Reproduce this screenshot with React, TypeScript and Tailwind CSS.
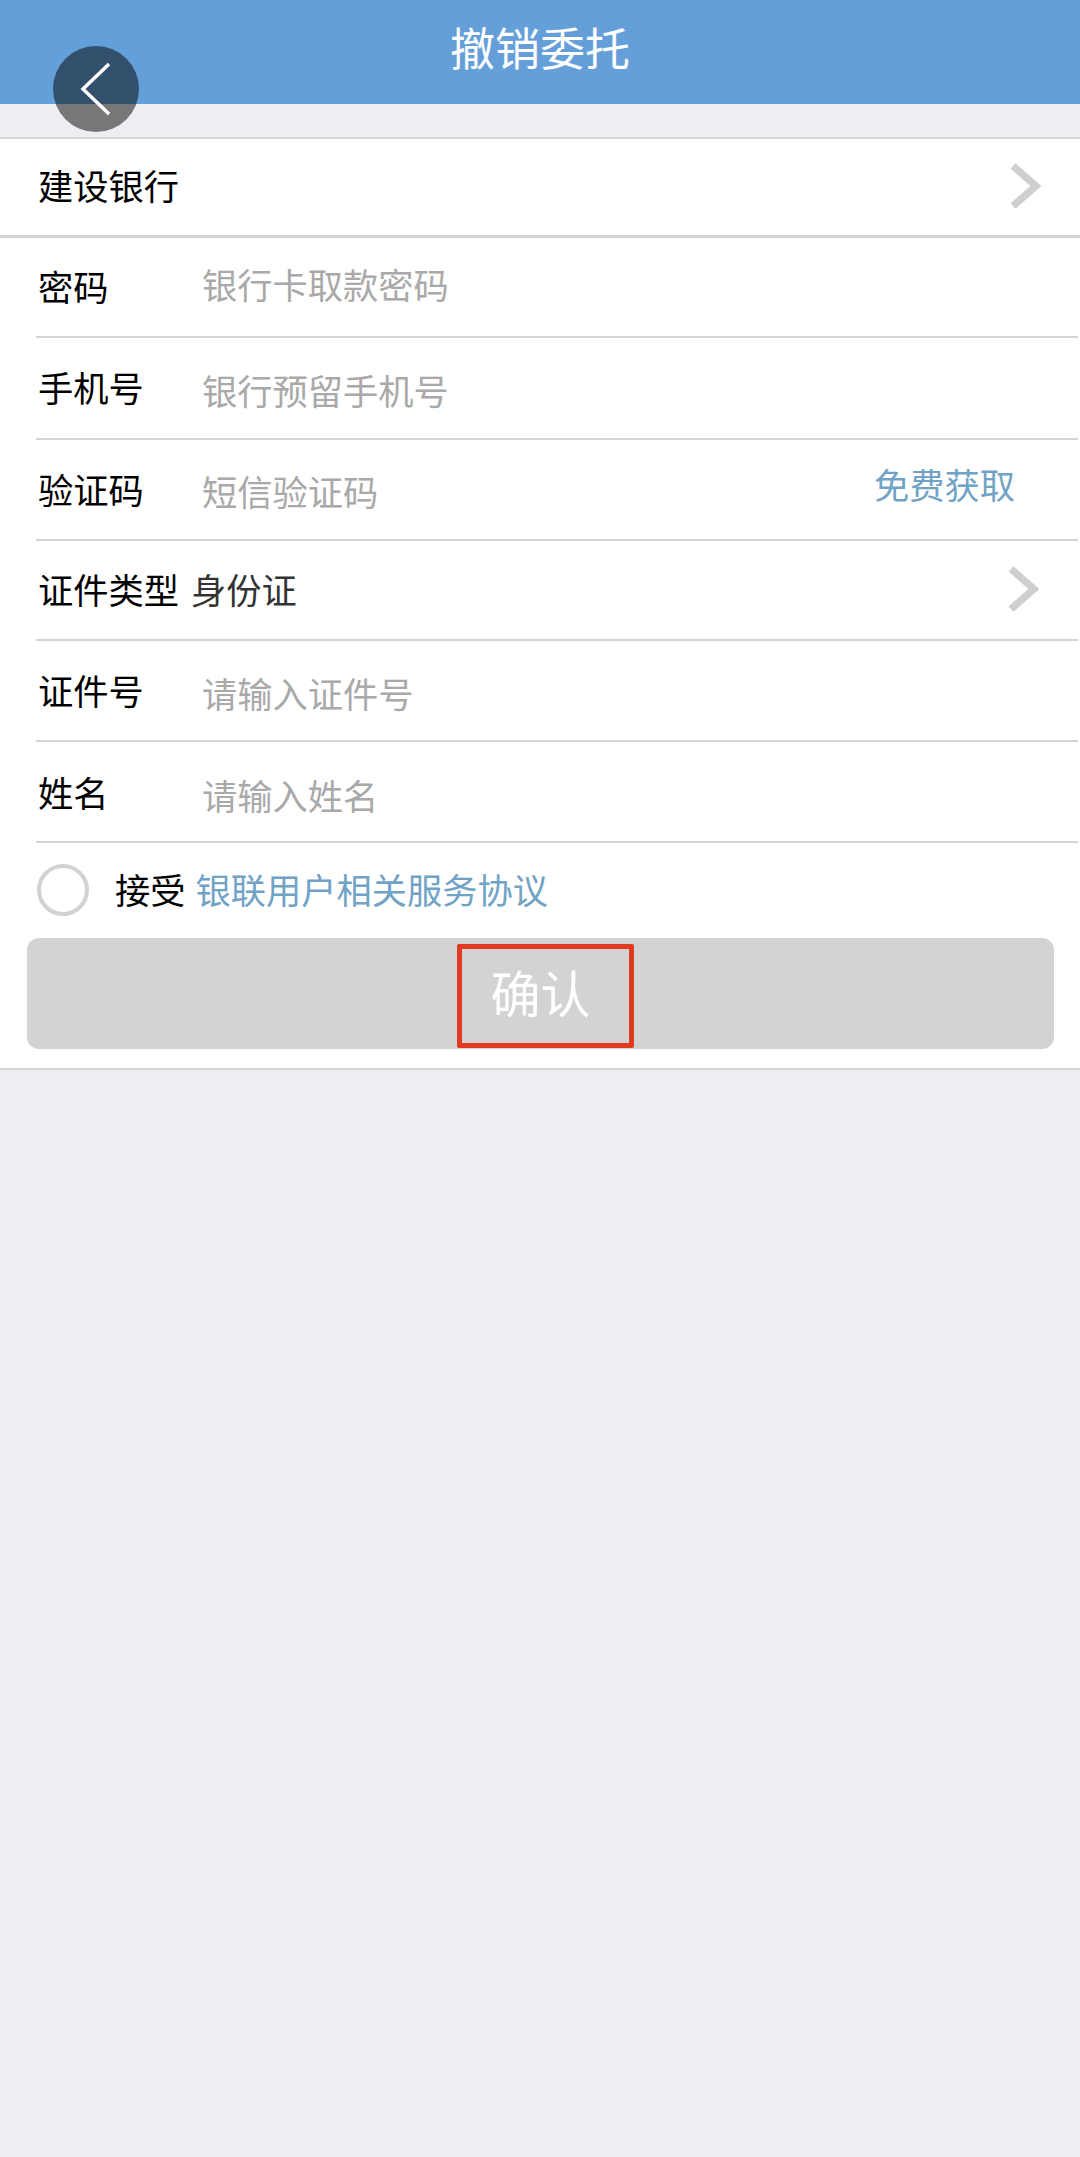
import React from 'react';

const font = '[font-family:"Noto_Sans_CJK_SC","Liberation_Sans",sans-serif]';

function Chevron() {
  return (
    <svg className="absolute right-[39px] top-[48.5%] -translate-y-1/2" width="32" height="46" viewBox="0 0 32 46" fill="none">
      <path d="M4 3 L27 23 L4 43" stroke="#cfcfcf" strokeWidth="7.5" />
    </svg>
  );
}

function InputRow({ label, placeholder, height, labelNudge = '', inputNudge = '', children }: { label: string; placeholder: string; height: string; labelNudge?: string; inputNudge?: string; children?: React.ReactNode }) {
  return (
    <div className={`relative flex items-center border-b-2 border-[#d4d4d4] ml-[36px] mr-[2px] ${height}`}>
      <span className={`ml-[2px] w-[164px] shrink-0 text-[35.25px] leading-none text-black ${labelNudge}`}>{label}</span>
      <input
        readOnly
        placeholder={placeholder}
        className={`min-w-0 flex-1 bg-transparent text-[35.25px] leading-none outline-none placeholder:text-[#a9a9a9] ${inputNudge}`}
      />
      {children}
    </div>
  );
}

export default function App() {
  return (
    <div className={`relative min-h-[2157px] w-[1080px] bg-[#eeeef2] ${font}`}>
      {/* Title bar */}
      <header className="flex h-[104px] justify-center bg-[#659fd9] pt-[16px]">
        <h1 className="text-[45px] font-normal leading-[62px] text-white">撤销委托</h1>
      </header>

      {/* Floating back button */}
      <button className="absolute left-[53px] top-[46px] flex h-[86px] w-[86px] items-center justify-center rounded-full bg-black/50">
        <svg width="32" height="54" viewBox="0 0 32 54" fill="none">
          <path d="M29 2 L3 27 L29 52" stroke="#fff" strokeWidth="3.5" />
        </svg>
      </button>

      <main className="mt-[33px] border-y-2 border-[#d4d4d4] bg-white">
        {/* Bank selector */}
        <div className="relative flex h-[99px] items-center border-b-[3px] border-[#d4d4d4] pb-[5px] pl-[38px]">
          <span className="text-[35.25px] leading-none text-black">建设银行</span>
          <Chevron />
        </div>

        <InputRow label="密码" placeholder="银行卡取款密码" height="h-[100px]" labelNudge="-translate-y-[1px]" inputNudge="-translate-y-[4px]" />
        <InputRow label="手机号" placeholder="银行预留手机号" height="h-[102px]" labelNudge="-translate-y-[1px]" inputNudge="translate-y-[1px]" />
        <InputRow label="验证码" placeholder="短信验证码" height="h-[101px]" labelNudge="-translate-y-[1px]" inputNudge="translate-y-[1px]">
          <span className="absolute right-[63px] top-[26px] text-[35.25px] leading-none text-[#70a3c6]">免费获取</span>
        </InputRow>

        {/* Certificate type */}
        <div className="relative ml-[36px] mr-[2px] flex h-[100px] items-center border-b-2 border-[#d4d4d4] pb-[2px]">
          <span className="ml-[2px] text-[35.25px] leading-none text-black">证件类型</span>
          <span className="ml-[12px] text-[35.25px] leading-none text-[#333]">身份证</span>
          <Chevron />
        </div>

        <InputRow label="证件号" placeholder="请输入证件号" height="h-[101px]" labelNudge="-translate-y-[1px]" inputNudge="translate-y-[2px]" />
        <InputRow label="姓名" placeholder="请输入姓名" height="h-[101px]" inputNudge="translate-y-[3px]" />

        {/* Agreement */}
        <div className="flex h-[95px] items-center pb-[4px] pl-[37px]">
          <span className="h-[52px] w-[52px] shrink-0 translate-y-[1px] rounded-full border-[4px] border-[#d2d2d2]" />
          <span className="ml-[26px] text-[35.25px] leading-none text-black">接受</span>
          <span className="ml-[10px] text-[35.25px] leading-none text-[#70a3c6]">银联用户相关服务协议</span>
        </div>

        {/* Submit */}
        <div className="pb-[19px] pl-[27px] pr-[26px]">
          <button className="relative flex h-[111px] w-full items-center justify-center rounded-[12px] bg-[#d3d3d3] pb-[6px] text-[50px] leading-none text-white">
            确认
            <span className="absolute left-[430px] top-[6px] h-[104px] w-[177px] rounded-[2px] border-[5px] border-[#e03a20]" />
          </button>
        </div>
      </main>
    </div>
  );
}
